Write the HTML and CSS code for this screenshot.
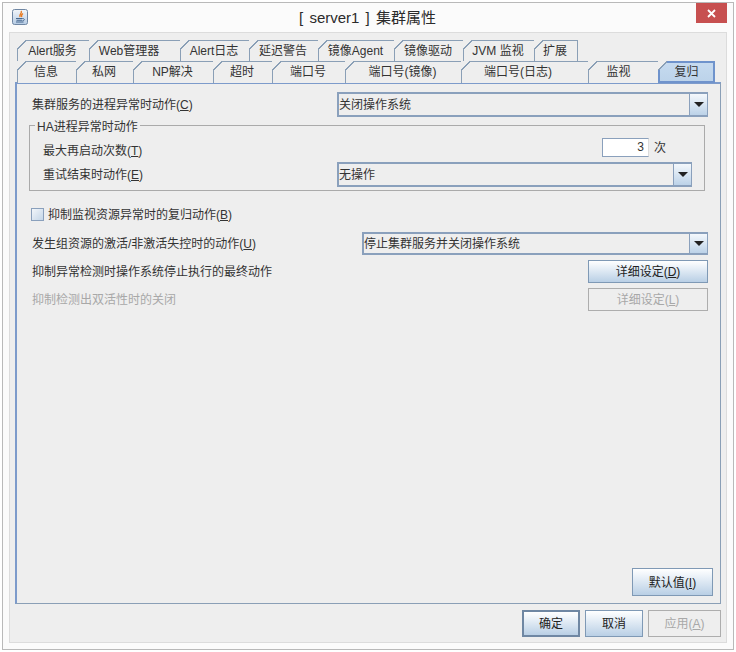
FILE: index.html
```html
<!DOCTYPE html>
<html lang="zh-CN">
<head>
<meta charset="utf-8">
<title>[ server1 ] 集群属性</title>
<link rel="stylesheet" href="styles.css">
</head>
<body>
<div class="window">
  <header class="titlebar">
    <span class="app-icon">
      <svg width="16" height="16" viewBox="0 0 16 16">
        <defs>
          <linearGradient id="icon-bg" x1="0" y1="0" x2="0" y2="1">
            <stop offset="0" stop-color="#f2f5f9"/>
            <stop offset="1" stop-color="#b5cbe4"/>
          </linearGradient>
        </defs>
        <rect x="0.5" y="0.5" width="15" height="15" rx="2" fill="url(#icon-bg)" stroke="#6f86a3"/>
        <path d="M9 2 C11 4 6.5 5 8 8 M11 4.5 C9.5 5.5 9 6.5 9.8 8" fill="none" stroke="#e8791f" stroke-width="1.4"/>
        <path d="M4 9.5 H10.5 M4.5 11.2 H10 M4 13 H11.5" stroke="#47688f" stroke-width="1.1" fill="none"/>
        <path d="M10.5 9.5 C13 9.5 13 11.7 10.5 11.7" stroke="#47688f" fill="none"/>
      </svg>
    </span>
    <h1 class="title">[ server1 ] 集群属性</h1>
    <button class="close" type="button" aria-label="关闭">
      <svg width="9" height="9" viewBox="0 0 9 9"><path d="M1 1 L8 8 M8 1 L1 8" stroke="#fff" stroke-width="1.8"/></svg>
    </button>
  </header>

  <div class="panel">
    <div class="tabs">
      <div class="tab-row row-top">
        <div class="tab">Alert服务</div>
        <div class="tab shift-web">Web管理器</div>
        <div class="tab">Alert日志</div>
        <div class="tab">延迟警告</div>
        <div class="tab">镜像Agent</div>
        <div class="tab">镜像驱动</div>
        <div class="tab">JVM 监视</div>
        <div class="tab">扩展</div>
      </div>
      <div class="tab-row row-bottom">
        <div class="tab">信息</div>
        <div class="tab">私网</div>
        <div class="tab">NP解决</div>
        <div class="tab">超时</div>
        <div class="tab">端口号</div>
        <div class="tab">端口号(镜像)</div>
        <div class="tab shift-log">端口号(日志)</div>
        <div class="tab shift-mon">监视</div>
        <div class="tab active">复归</div>
      </div>
    </div>

    <main class="pane">
      <div class="row row-process">
        <label class="label">集群服务的进程异常时动作(<u>C</u>)</label>
        <div class="combo combo-process">
          <span class="combo-value">关闭操作系统</span>
          <span class="combo-arrow"><i></i></span>
        </div>
      </div>

      <fieldset class="group">
        <legend>HA进程异常时动作</legend>
        <div class="group-row group-retry">
          <label class="label">最大再启动次数(<u>T</u>)</label>
          <input class="spinner" type="text" value="3">
          <span class="unit">次</span>
        </div>
        <div class="group-row group-end">
          <label class="label">重试结束时动作(<u>E</u>)</label>
          <div class="combo combo-end">
            <span class="combo-value">无操作</span>
            <span class="combo-arrow"><i></i></span>
          </div>
        </div>
      </fieldset>

      <div class="check-row">
        <span class="checkbox"></span>
        <label class="label">抑制监视资源异常时的复归动作(<u>B</u>)</label>
      </div>

      <div class="row row-group">
        <label class="label">发生组资源的激活/非激活失控时的动作(<u>U</u>)</label>
        <div class="combo combo-group">
          <span class="combo-value">停止集群服务并关闭操作系统</span>
          <span class="combo-arrow"><i></i></span>
        </div>
      </div>

      <div class="row row-final">
        <label class="label">抑制异常检测时操作系统停止执行的最终动作</label>
        <button class="btn btn-detail" type="button">详细设定(<u>D</u>)</button>
      </div>

      <div class="row row-dual">
        <label class="label disabled">抑制检测出双活性时的关闭</label>
        <button class="btn btn-detail" type="button" disabled>详细设定(<u>L</u>)</button>
      </div>

      <div class="pane-foot">
        <button class="btn btn-default" type="button">默认值(<u>I</u>)</button>
      </div>
    </main>

    <footer class="actions">
      <button class="btn btn-action focused" type="button">确定</button>
      <button class="btn btn-action" type="button">取消</button>
      <button class="btn btn-apply" type="button" disabled>应用(<u>A</u>)</button>
    </footer>
  </div>
</div>
</body>
</html>
```
FILE: styles.css
```css
* { box-sizing: border-box; }

html, body { margin: 0; height: 100%; background: #fff; }

body {
  padding: 2px;
  font-family: "Liberation Sans", "Noto Sans CJK SC", sans-serif;
  font-size: 12px;
  color: #333;
}

.window {
  width: 732px;
  height: 648px;
  border: 1px solid #b9b9b9;
  background: #fbfbfb;
  padding: 0 6px 6px 6px;
  display: flex;
  flex-direction: column;
}

.titlebar {
  height: 29px;
  flex: none;
  display: flex;
  align-items: center;
  position: relative;
  padding-left: 3px;
}

.app-icon { display: flex; margin-top: -1px; }

.title {
  position: absolute;
  left: 0;
  right: 0;
  margin: 0 0 2px;
  text-align: center;
  font-size: 15px;
  font-weight: 400;
  word-spacing: 2px;
  color: #2b2b2b;
  padding-right: 1px;
}

.close {
  position: absolute;
  top: 0;
  right: 0;
  width: 31px;
  height: 20px;
  border: 0;
  padding: 0;
  background: #c75050;
  display: flex;
  align-items: center;
  justify-content: center;
}

.panel {
  flex: 1;
  min-height: 0;
  display: flex;
  flex-direction: column;
  background: #eeeeee;
  border: 1px solid #dcdcdc;
  padding: 7px 5px 5px 5px;
}

.tabs { flex: none; padding-left: 2px; position: relative; z-index: 1; }

.tab-row { display: grid; height: 21px; }

.row-top { grid-template-columns: 72px 91px 69px 69px 76px 69px 71px 43px; }

.row-bottom { grid-template-columns: 59px 57px 80px 59px 73px 116px 127px 70px 57px; }

.tab {
  position: relative;
  display: flex;
  align-items: center;
  justify-content: center;
  border: 1px solid #8a9fb6;
  border-bottom: 0;
  margin-right: -1px;
  background: #eeeeee;
  white-space: nowrap;
  line-height: 20px;
  padding-right: 2px;
  padding-bottom: 1px;
}

.shift-web { padding-right: 12px; }

.shift-log { padding-right: 14px; }

.shift-mon { padding-right: 10px; }

.tab::before {
  content: "";
  position: absolute;
  left: -1px;
  top: -1px;
  width: 9px;
  height: 9px;
  background: linear-gradient(135deg, #eeeeee 0 46%, #8a9fb6 46% 58%, transparent 58%);
}

.tab.active {
  background: linear-gradient(#c6daef, #bcd3ea);
  border: 2px solid #6f93cc;
  height: 22px;
  margin-right: 0;
  padding-right: 0;
  z-index: 2;
}

.tab.active::before { left: -2px; top: -2px; }

.pane {
  flex: 1;
  min-height: 0;
  display: flex;
  flex-direction: column;
  border: 1px solid #8a9fb6;
  border-top: 2px solid #7d9bcb;
  border-left: 2px solid #7d9bcb;
  padding: 8px 12px 7px 15px;
}

.label { white-space: nowrap; padding-bottom: 2px; }

.label.disabled { color: #a8a8a8; }

u { text-decoration: underline; text-underline-offset: 1px; }

.row {
  display: flex;
  align-items: center;
  justify-content: space-between;
}

.row-process { height: 25px; flex: none; }

.combo {
  display: flex;
  height: 100%;
  border: 2px solid #8aa0bc;
  border-right-width: 1px;
  background: #eeeeee;
  align-items: stretch;
}

.combo-value {
  flex: 1;
  display: flex;
  align-items: center;
  padding-bottom: 2px;
}

.combo-arrow {
  flex: none;
  width: 18px;
  border-left: 1px solid #8aa0bc;
  background: linear-gradient(#f4f8fc, #bcd2e8);
  display: flex;
  align-items: center;
  justify-content: center;
}

.combo-arrow i {
  width: 0;
  height: 0;
  border-left: 5px solid transparent;
  border-right: 5px solid transparent;
  border-top: 5px solid #222;
}

.combo-process { width: 371px; }

.group {
  margin: 0 3px 0 -3px;
  height: 74px;
  padding: 0 0 0 13px;
  border: 1px solid #aaa;
  min-width: 0;
  flex: none;
}

.group legend {
  padding: 3px 2px 0;
  margin-left: -8px;
  line-height: 14px;
}

.group-row { display: flex; align-items: center; }

.group-retry { height: 19px; margin-top: 4px; }

.group-retry .label { margin-right: auto; padding: 4px 0 0; }

.spinner {
  width: 47px;
  height: 19px;
  border: 1px solid #8aa0bc;
  border-right-color: #dcdcdc;
  text-align: right;
  padding: 0 4px 2px 0;
  font: inherit;
  color: #333;
  background: #fff;
}

.unit { width: 55px; padding-left: 5px; padding-bottom: 2px; }

.group-end { height: 25px; margin-top: 5px; }

.group-end .label { margin-right: auto; }

.combo-end { width: 355px; margin-right: 12px; }

.check-row {
  display: flex;
  align-items: center;
  gap: 4px;
  height: 16px;
  margin: 15px 0 0 -1px;
  flex: none;
}

.checkbox {
  width: 13px;
  height: 13px;
  border: 1px solid #8aa0bc;
  background: linear-gradient(135deg, #f2f6fa, #c4d6e8);
}

.row-group { height: 23px; margin-top: 10px; flex: none; }

.combo-group { width: 346px; }

.row-final { height: 23px; margin-top: 5px; flex: none; }

.row-dual { height: 23px; margin-top: 5px; flex: none; }

.btn {
  font: inherit;
  color: #222;
  padding: 0 0 2px;
  border: 1px solid #7f99b5;
  background: linear-gradient(#ffffff, #eaf1f8 30%, #b9cfe5);
  white-space: nowrap;
}

.btn:disabled {
  background: #eeeeee;
  border-color: #adadad;
  color: #a8a8a8;
}

.btn-detail { width: 120px; height: 23px; }

.pane-foot {
  margin-top: auto;
  display: flex;
  justify-content: flex-end;
  margin-right: -5px;
}

.btn-default { width: 81px; height: 28px; }

.actions {
  flex: none;
  display: flex;
  justify-content: flex-end;
  gap: 5px;
  padding-top: 6px;
}

.btn-action { width: 58px; height: 27px; }

.btn-action.focused { border: 2px solid #6f87a3; }

.btn-apply { width: 73px; height: 27px; }
```
